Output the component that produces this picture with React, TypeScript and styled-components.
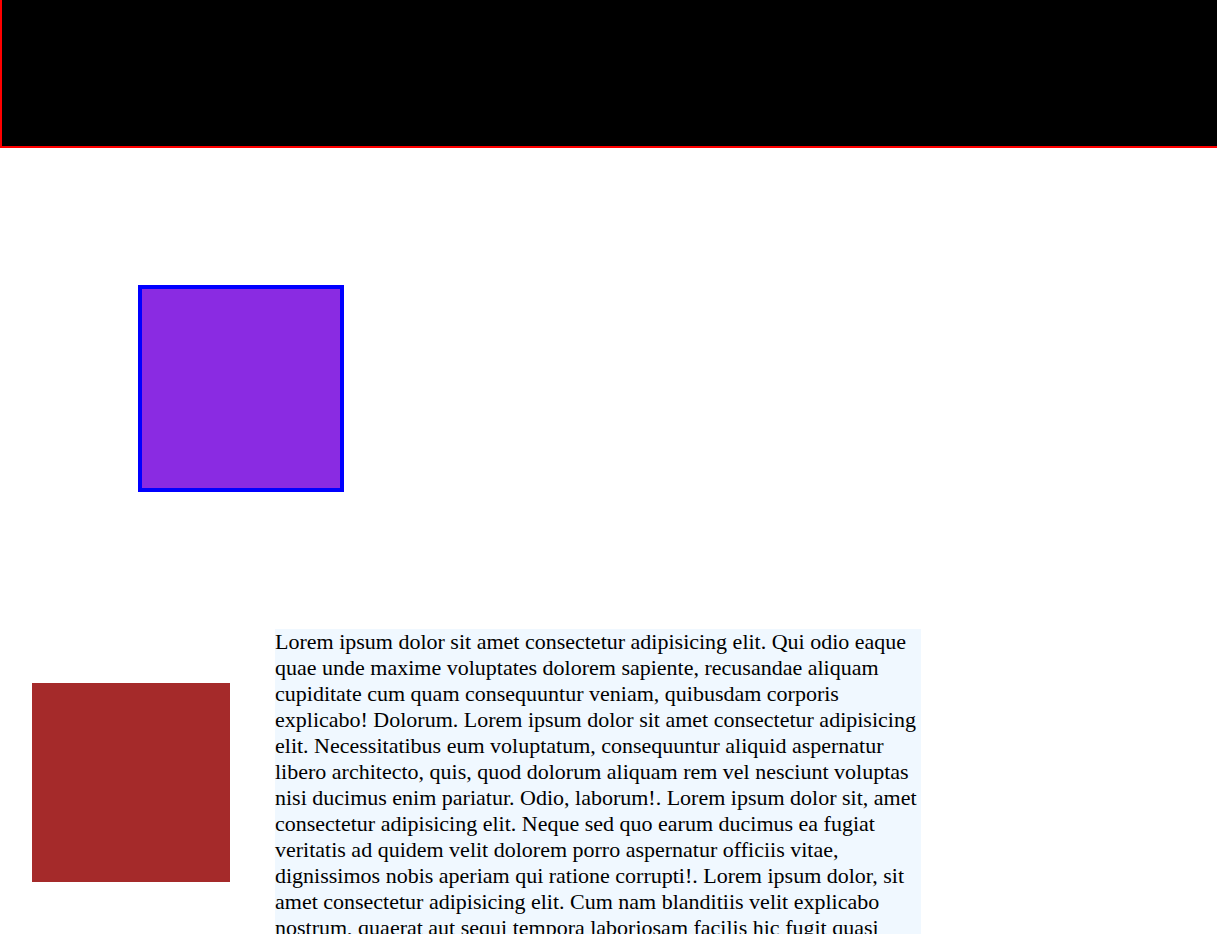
import React from 'react';
import styled, { createGlobalStyle } from 'styled-components';

const GlobalStyle = createGlobalStyle`
  html, body {
    margin: 0;
    padding: 0;
    background: #ffffff;
    overflow: hidden;
  }
  body {
    font-family: "Liberation Serif", "Times New Roman", serif;
  }
`;

const Viewport = styled.div`
  width: 100vw;
  height: 100vh;
  overflow: scroll;

  &::-webkit-scrollbar {
    width: 21px;
    height: 21px;
    background: #f1f1f1;
  }
  &::-webkit-scrollbar-track {
    background: #f1f1f1;
  }
  &::-webkit-scrollbar-thumb {
    background: #c1c1c1;
    border: 2px solid #f1f1f1;
  }
  &::-webkit-scrollbar-corner {
    background: #dcdcdc;
  }
  &::-webkit-scrollbar-button:single-button {
    display: block;
    width: 21px;
    height: 21px;
    background: #f1f1f1;
  }
`;

const Page = styled.div`
  width: 1217px;
`;

const Header = styled.header`
  box-sizing: border-box;
  width: 100%;
  height: 148px;
  background: #000000;
  border-left: 2px solid #ff0000;
  border-bottom: 2px solid #ff0000;
`;

const Square = styled.div<{ $color: string; $border?: string; $size: number }>`
  box-sizing: border-box;
  flex: none;
  width: ${(p) => p.$size}px;
  height: ${(p) => p.$size + 1}px;
  background: ${(p) => p.$color};
  border: ${(p) => (p.$border ? `4px solid ${p.$border}` : 'none')};
`;

const Stage = styled.section`
  padding: 137px 0 137px 138px;
`;

const Row = styled.section`
  display: flex;
  align-items: flex-start;
  gap: 45px;
  padding-left: 32px;
`;

const RedWrap = styled.div`
  padding-top: 54px;
`;

const Copy = styled.p`
  width: 646px;
  margin: 0;
  background: #f0f8ff;
  color: #000000;
  font-size: 22px;
  line-height: 26px;
`;

const paragraph =
  'Lorem ipsum dolor sit amet consectetur adipisicing elit. Qui odio eaque quae unde maxime voluptates dolorem sapiente, recusandae aliquam cupiditate cum quam consequuntur veniam, quibusdam corporis explicabo! Dolorum. Lorem ipsum dolor sit amet consectetur adipisicing elit. Necessitatibus eum voluptatum, consequuntur aliquid aspernatur libero architecto, quis, quod dolorum aliquam rem vel nesciunt voluptas nisi ducimus enim pariatur. Odio, laborum!. Lorem ipsum dolor sit, amet consectetur adipisicing elit. Neque sed quo earum ducimus ea fugiat veritatis ad quidem velit dolorem porro aspernatur officiis vitae, dignissimos nobis aperiam qui ratione corrupti!. Lorem ipsum dolor, sit amet consectetur adipisicing elit. Cum nam blanditiis velit explicabo nostrum, quaerat aut sequi tempora laboriosam facilis hic fugit quasi quos dolor, error ipsa rerum provident ex! ';

const App = (): JSX.Element => {
  return (
    <>
      <GlobalStyle />
      <Viewport>
        <Page>
          <Header />
          <Stage>
            <Square $size={206} $color="#8a2be2" $border="#0000ff" />
          </Stage>
          <Row>
            <RedWrap>
              <Square $size={198} $color="#a52a2a" />
            </RedWrap>
            <Copy>
              {paragraph}
              {paragraph}
              {paragraph}
            </Copy>
          </Row>
        </Page>
      </Viewport>
    </>
  );
};

export default App;
